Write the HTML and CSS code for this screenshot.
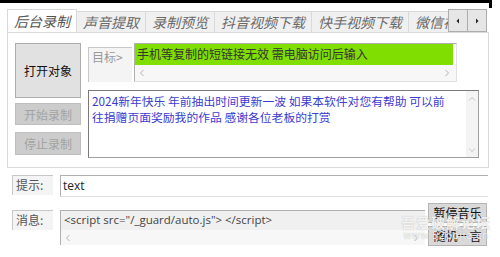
FILE: index.html
```html
<!DOCTYPE html>
<html lang="zh">
<head>
    <meta charset="UTF-8">
    <title>后台录制</title>
    <link rel="stylesheet" href="styles.css">
</head>
<body>
    <div class="frame-top"></div>
    <div class="frame-corner"></div>

    <!-- 选项卡 -->
    <div class="tab-strip">
        <div class="tabs">
            <div class="tab active">后台录制</div>
            <div class="tab">声音提取</div>
            <div class="tab">录制预览</div>
            <div class="tab">抖音视频下载</div>
            <div class="tab">快手视频下载</div>
            <div class="tab">微信视频号</div>
        </div>
        <div class="tab-scroll">
            <span class="arrow-btn"><svg width="6" height="6" viewBox="0 0 6 6"><path d="M4 0.5 L1.5 3 L4 5.5 Z" fill="#222"/></svg></span>
            <span class="arrow-btn"><svg width="6" height="6" viewBox="0 0 6 6"><path d="M2 0.5 L4.5 3 L2 5.5 Z" fill="#222"/></svg></span>
        </div>
    </div>

    <!-- 录制面板 -->
    <div class="panel">
        <div class="side-buttons">
            <button class="btn btn-open">打开对象</button>
            <button class="btn btn-disabled">开始录制</button>
            <button class="btn btn-disabled btn-stop">停止录制</button>
        </div>
        <div class="main-col">
            <div class="target-row">
                <div class="field-label target-label">目标&gt;</div>
                <div class="target-box">
                    <div class="target-text">手机等复制的短链接无效 需电脑访问后输入</div>
                    <div class="hscroll">
                        <svg width="6" height="8" viewBox="0 0 6 8"><path d="M4.5 1 L1.5 4 L4.5 7" fill="none" stroke="#b5b5b5"/></svg>
                        <svg width="6" height="8" viewBox="0 0 6 8"><path d="M1.5 1 L4.5 4 L1.5 7" fill="none" stroke="#b5b5b5"/></svg>
                    </div>
                </div>
            </div>
            <div class="notice-box">
                <div class="notice-text">2024新年快乐 年前抽出时间更新一波 如果本软件对您有帮助 可以前往捐赠页面奖励我的作品 感谢各位老板的打赏</div>
                <div class="vscroll">
                    <svg width="8" height="6" viewBox="0 0 8 6"><path d="M1 4.5 L4 1.5 L7 4.5" fill="none" stroke="#c0c0c0"/></svg>
                    <svg width="8" height="6" viewBox="0 0 8 6"><path d="M1 1.5 L4 4.5 L7 1.5" fill="none" stroke="#c0c0c0"/></svg>
                </div>
            </div>
        </div>
    </div>

    <!-- 提示 -->
    <div class="hint-row">
        <div class="field-label small-label">提示:</div>
        <div class="hint-input">text</div>
    </div>

    <!-- 消息 -->
    <div class="msg-row">
        <div class="field-label small-label">消息:</div>
        <div class="msg-box">
            <div class="msg-text">&lt;script src="/_guard/auto.js"&gt; &lt;/script&gt;</div>
            <div class="hscroll msg-scroll">
                <svg width="6" height="8" viewBox="0 0 6 8"><path d="M4.5 1 L1.5 4 L4.5 7" fill="none" stroke="#b5b5b5"/></svg>
                <svg width="6" height="8" viewBox="0 0 6 8"><path d="M1.5 1 L4.5 4 L1.5 7" fill="none" stroke="#b5b5b5"/></svg>
            </div>
        </div>
        <div class="msg-buttons">
            <button class="btn btn-small">暂停音乐</button>
            <button class="btn btn-small">随机一言</button>
        </div>
    </div>

    <!-- 水印 -->
    <div class="watermark">
        <div class="wm-title">吾爱破解论坛</div>
        <div class="wm-url">www.52pojie.cn</div>
    </div>
</body>
</html>
```

FILE: styles.css
```css
* {
    margin: 0;
    padding: 0;
    box-sizing: border-box;
}

body {
    width: 500px;
    height: 257px;
    overflow: hidden;
    position: relative;
    background-color: #fff;
    font-family: "Noto Sans CJK SC", sans-serif;
    font-size: 12px;
    color: #222;
}

/* 窗口边框 */
.frame-top {
    width: 492px;
    height: 3px;
    background-color: #000;
}

.frame-corner {
    position: absolute;
    top: 0;
    left: 489px;
    width: 3px;
    height: 8px;
    background-color: #000;
}

/* 选项卡 */
.tab-strip {
    display: flex;
    margin: 6px 0 0 7px;
    width: 481px;
    height: 23px;
}

.tabs {
    display: flex;
    align-items: flex-end;
    width: 441px;
    overflow: hidden;
}

.tab {
    flex-shrink: 0;
    height: 21px;
    padding: 0 6px;
    margin-right: -1px;
    border: 1px solid #d9d9d9;
    border-bottom: none;
    background-color: #f0f0f0;
    color: #6a6a6a;
    font-size: 14px;
    font-style: italic;
    line-height: 20px;
    white-space: nowrap;
}

.tab.active {
    height: 24px;
    margin-bottom: -1px;
    background-color: #fff;
    position: relative;
    z-index: 1;
    color: #555;
    line-height: 22px;
}

.tab-scroll {
    display: flex;
}

.arrow-btn {
    display: flex;
    align-items: center;
    justify-content: center;
    width: 20px;
    height: 23px;
    margin-right: -1px;
    border: 1px solid #adadad;
    background-color: #e6e6e6;
}

/* 面板 */
.panel {
    display: flex;
    margin-left: 7px;
    width: 482px;
    height: 136px;
    border: 1px solid #d9d9d9;
    padding: 10px 0 0 7px;
    gap: 7px;
}

.side-buttons {
    display: flex;
    flex-direction: column;
    width: 66px;
}

.btn {
    font-family: "Noto Sans CJK SC", sans-serif;
    font-size: 12px;
    border: 1px solid #adadad;
    background-color: #e1e1e1;
    color: #111;
}

.btn-open {
    height: 55px;
}

.btn-disabled {
    height: 22px;
    margin-top: 5px;
    border-color: #bfbfbf;
    background-color: #cccccc;
    color: #a3a3a3;
}

.btn-stop {
    margin-top: 7px;
    height: 23px;
}

.main-col {
    display: flex;
    flex-direction: column;
    gap: 8px;
}

.target-row {
    display: flex;
    gap: 2px;
}

.field-label {
    border-top: 1px solid #c8c8c8;
    border-left: 1px solid #c8c8c8;
    background-color: #f4f4f4;
    color: #999;
    padding: 1px 0 0 3px;
    line-height: 16px;
}

.target-label {
    width: 44px;
    height: 35px;
    margin-top: 4px;
    font-size: 12px;
}

.target-box {
    width: 323px;
    height: 39px;
    border: 1px solid #b0b0b0;
    border-right-color: #e0e0e0;
    border-bottom-color: #e0e0e0;
}

.target-text {
    height: 21px;
    background-color: #80de00;
    padding-left: 2px;
    color: #333;
    line-height: 20px;
    margin-right: 3px;
}

.hscroll {
    display: flex;
    justify-content: space-between;
    align-items: center;
    height: 16px;
    padding: 0 6px 0 4px;
    background-color: #f7f7f7;
}

.notice-box {
    display: flex;
    width: 391px;
    height: 68px;
    border: 1px solid #7a7a7a;
    border-right-color: #a0a0a0;
    border-bottom-color: #a0a0a0;
}

.notice-text {
    flex: 1;
    padding: 2px 14px 2px 3px;
    color: #3c3cd0;
    line-height: 16px;
    font-size: 11.8px;
}

.vscroll {
    display: flex;
    flex-direction: column;
    justify-content: space-between;
    align-items: center;
    width: 12px;
    padding: 5px 0 4px;
    background-color: #f4f4f4;
}

/* 提示与消息 */
.hint-row {
    display: flex;
    gap: 7px;
    margin: 7px 0 0 12px;
}

.small-label {
    width: 41px;
    height: 20px;
    color: #555;
    font-size: 12px;
    padding-top: 1px;
}

.hint-input {
    width: 428px;
    height: 22px;
    border-top: 1px solid #b0b0b0;
    border-left: 1px solid #b0b0b0;
    border-bottom: 1px solid #e2e2e2;
    padding: 1px 0 0 2px;
    font-family: "Open Sans", sans-serif;
    font-size: 12px;
    color: #222;
}

.msg-row {
    display: flex;
    gap: 7px;
    margin: 13px 0 0 12px;
}

.msg-box {
    width: 365px;
    height: 35px;
    border-top: 1px solid #b0b0b0;
    border-left: 1px solid #b0b0b0;
    background-color: #f4f4f4;
}

.msg-text {
    height: 19px;
    padding: 1px 0 0 3px;
    background-color: #f0f0f0;
    font-family: "Open Sans", sans-serif;
    font-size: 11.5px;
    color: #444;
}

.msg-scroll {
    height: 15px;
    background-color: #f7f7f7;
}

.msg-buttons {
    display: flex;
    flex-direction: column;
    gap: 3px;
    margin: -7px 0 0 -4px;
}

.btn-small {
    width: 59px;
    height: 20px;
    font-size: 12px;
    border-color: #b5b5b5;
    background-color: #d9d9d9;
    line-height: 16px;
}

/* 水印 */
.watermark {
    position: absolute;
    left: 396px;
    top: 214px;
    width: 100px;
    text-align: center;
    color: rgba(255, 255, 255, 0.85);
    text-shadow: 0 0 1px rgba(120, 120, 120, 0.6);
    pointer-events: none;
}

.wm-title {
    font-size: 14px;
    font-weight: bold;
    line-height: 16px;
    letter-spacing: 1px;
}

.wm-url {
    font-family: "DejaVu Sans", sans-serif;
    font-size: 10px;
    line-height: 12px;
    letter-spacing: 0.5px;
}
```
